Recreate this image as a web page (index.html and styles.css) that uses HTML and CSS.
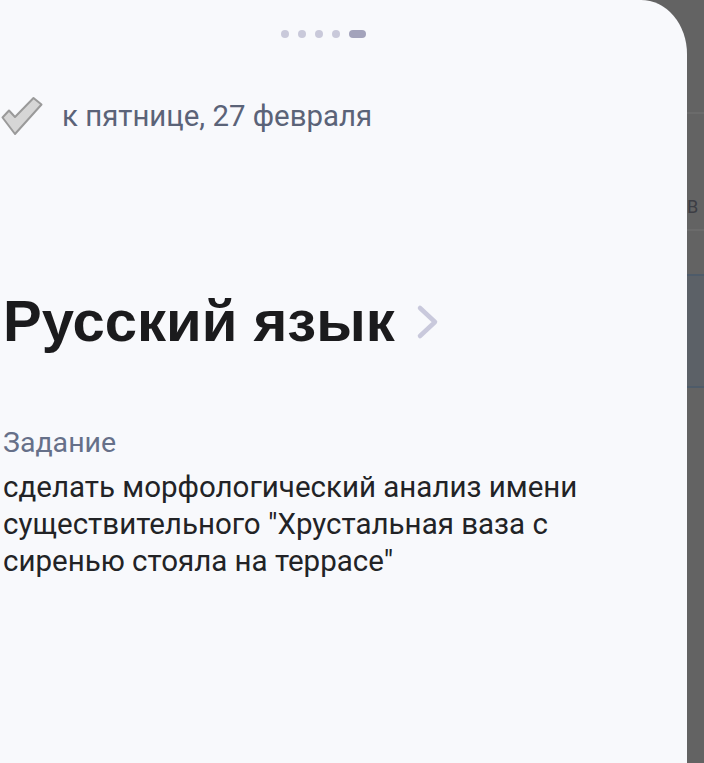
FILE: index.html
```html
<!DOCTYPE html>
<html lang="ru">
<head>
<meta charset="utf-8">
<link rel="stylesheet" href="styles.css">
</head>
<body>
<div class="screen">
  <main class="card">
    <div class="pager">
      <span class="dot"></span><span class="dot"></span><span class="dot"></span><span class="dot"></span><span class="pill"></span>
    </div>
    <div class="due">
      <svg class="check" width="44" height="42" viewBox="0 0 44 42">
        <path d="M2.5 22.5 L9 15.5 L15 22 L33.5 3 L41.5 9.5 L15 39 Z" fill="#d6d6d6" stroke="#9a9a9a" stroke-width="2" stroke-linejoin="round"/>
      </svg>
      <span class="due-text">к пятнице, 27 февраля</span>
    </div>
    <h1 class="subject">Русский язык <svg class="chev" width="26" height="36" viewBox="0 0 26 36"><path d="M5 4 L20 18 L5 32" fill="none" stroke="#c9c9dc" stroke-width="4.5" stroke-linecap="round" stroke-linejoin="round"/></svg></h1>
    <div class="task-label">Задание</div>
    <p class="task-text">сделать морфологический анализ имени существительного "Хрустальная ваза с сиренью стояла на террасе"</p>
  </main>
  <aside class="behind">
    <div class="b-top"></div>
    <div class="b-row"><span class="b-letter">B</span></div>
    <div class="b-gap"></div>
    <div class="b-band"></div>
    <div class="b-rest"></div>
  </aside>
</div>
</body>
</html>
```
FILE: styles.css
```css
html, body {
  margin: 0;
  padding: 0;
  width: 704px;
  height: 763px;
  overflow: hidden;
  background: #636363;
}
.screen {
  display: flex;
  height: 763px;
}
.card {
  width: 684px;
  flex: none;
  background: #f8f9fc;
  border-top-right-radius: 46px 54px;
  padding: 0 0 0 3px;
  box-sizing: content-box;
  font-family: Roboto, "Noto Sans", sans-serif;
}
.pager {
  display: flex;
  align-items: center;
  gap: 9px;
  height: 8px;
  margin: 30px 0 0 278px;
}
.dot {
  width: 8px;
  height: 8px;
  border-radius: 50%;
  background: #c9c9da;
}
.pill {
  width: 17px;
  height: 8px;
  border-radius: 4px;
  background: #a3a3bb;
}
.due {
  display: flex;
  align-items: center;
  margin: 57px 0 0 -3px;
  height: 42px;
}
.check {
  display: block;
  flex: none;
}
.due-text {
  margin-left: 18px;
  font-size: 29.4px;
  color: #5b6378;
}
.subject {
  margin: 151px 0 0 0;
  font-family: "Liberation Sans", Arial, sans-serif;
  font-weight: 700;
  font-size: 58px;
  line-height: 66px;
  color: #1b1b1d;
  display: flex;
  align-items: center;
  gap: 20px;
}
.chev {
  display: block;
  margin-top: 2px;
}
.task-label {
  margin-top: 71px;
  font-size: 28.5px;
  line-height: 36px;
  color: #667089;
}
.task-text {
  margin: 8px 0 0 0;
  width: 600px;
  font-size: 29.5px;
  line-height: 37px;
  color: #222326;
}
.behind {
  flex: 1;
  display: flex;
  flex-direction: column;
  overflow: hidden;
}
.b-top {
  height: 112px;
  border-bottom: 2px solid #6b6b6b;
}
.b-row {
  height: 115px;
  border-bottom: 2px solid #6b6b6b;
  position: relative;
}
.b-letter {
  position: absolute;
  left: 0;
  top: 82px;
  font-family: Roboto, sans-serif;
  font-size: 18px;
  color: #3c3d44;
}
.b-gap {
  height: 43px;
}
.b-band {
  height: 110px;
  background: #5c6167;
  border-top: 2px solid #4e5b69;
  border-bottom: 2px solid #4e5b69;
}
.b-rest {
  flex: 1;
}
```
